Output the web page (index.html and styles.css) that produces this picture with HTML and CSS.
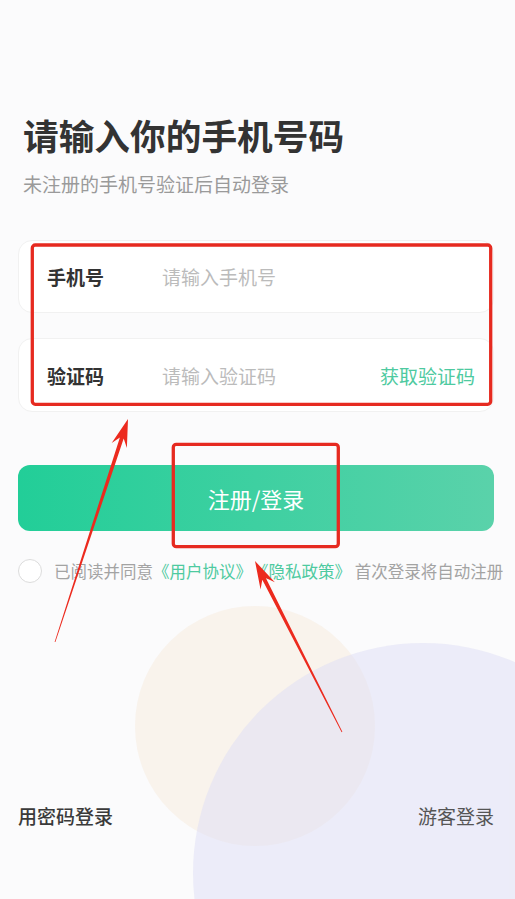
FILE: index.html
```html
<!DOCTYPE html>
<html lang="zh-CN">
<head>
  <meta charset="UTF-8" />
  <meta name="viewport" content="width=device-width, initial-scale=1.0" />
  <title>登录</title>
  <link rel="stylesheet" href="styles.css">
</head>
<body>
  <div class="page">
    <!-- Background circles -->
    <div class="blob blob-beige"></div>
    <div class="blob blob-lilac"></div>

    <h1 class="title">请输入你的手机号码</h1>
    <p class="subtitle">未注册的手机号验证后自动登录</p>

    <div class="field">
      <span class="field-label">手机号</span>
      <span class="field-input">请输入手机号</span>
    </div>
    <div class="field field-code">
      <span class="field-label">验证码</span>
      <span class="field-input">请输入验证码</span>
      <span class="get-code">获取验证码</span>
    </div>

    <button class="submit">注册/登录</button>

    <div class="agree">
      <span class="check"></span>
      <span class="agree-text">已阅读并同意<em>《用户协议》《隐私政策》</em> 首次登录将自动注册</span>
    </div>

    <div class="bottom">
      <span class="pwd-login">用密码登录</span>
      <span class="guest-login">游客登录</span>
    </div>

    <!-- Annotation marks -->
    <svg class="marks" width="515" height="899" viewBox="0 0 515 899">
      <rect x="32.3" y="245" width="458.4" height="159.3" rx="3" />
      <rect x="173.3" y="444.3" width="165" height="102.4" rx="3" />
      <polygon points="55.38,642.12 123.68,438.62 126.89,448.09 128,419 111.69,443.11 119.88,437.38 54.62,641.88" />
      <polygon points="342.36,731.82 265.85,577.91 274.83,582.32 255,561 260.57,589.58 262.29,579.73 341.64,732.18" />
    </svg>
  </div>
</body>
</html>
```

FILE: styles.css
```css
* {
  margin: 0;
  padding: 0;
  box-sizing: border-box;
}

body {
  background: #fbfbfc;
  font-family: "Noto Sans CJK SC", "Noto Sans", sans-serif;
  color: #333;
}

.page {
  position: relative;
  width: 515px;
  min-height: 899px;
  overflow: hidden;
  padding: 115px 21px 70px 18px;
  display: flex;
  flex-direction: column;
}

/* Background circles */
.blob {
  position: absolute;
  border-radius: 50%;
  z-index: 0;
}

.blob-beige {
  left: 135px;
  top: 606px;
  width: 240px;
  height: 240px;
  background: rgba(246, 232, 218, 0.45);
}

.blob-lilac {
  left: 193px;
  top: 643px;
  width: 460px;
  height: 460px;
  background: rgba(222, 222, 245, 0.5);
}

.title,
.subtitle,
.field,
.submit,
.agree,
.bottom {
  position: relative;
  z-index: 1;
}

.title {
  padding-left: 5px;
  font-size: 35.7px;
  line-height: 40px;
  font-weight: 700;
  color: #333;
}

.subtitle {
  margin-top: 16px;
  padding-left: 5px;
  font-size: 19px;
  line-height: 26px;
  color: #9a9a9a;
}

.field {
  margin-top: 43px;
  height: 73px;
  background: #fff;
  border: 1px solid #f1f1f1;
  border-radius: 14px;
  display: flex;
  align-items: center;
  padding: 0 18px 0 28px;
  font-size: 19px;
}

.field-code {
  margin-top: 25px;
  height: 74px;
}

.field-label {
  width: 115px;
  font-weight: 700;
  color: #333;
}

.field-input {
  flex: 1;
  color: #bbb;
}

.get-code {
  color: #4ecaa0;
}

.submit {
  margin-top: 53px;
  height: 66px;
  border: none;
  border-radius: 12px;
  background: linear-gradient(90deg, #22ce98, #5ad2aa);
  color: #fff;
  font-family: inherit;
  font-size: 22px;
}

.agree {
  margin-top: 27px;
  margin-right: -13px;
  display: flex;
  align-items: center;
  gap: 12px;
  height: 26px;
}

.check {
  flex: none;
  width: 24px;
  height: 24px;
  border-radius: 50%;
  border: 1px solid #dcdcdc;
  background: #fff;
}

.agree-text {
  font-size: 16.5px;
  color: #a3a3a3;
  white-space: nowrap;
  text-spacing-trim: space-all;
}

.agree-text em {
  font-style: normal;
  color: #4ecaa0;
}

.bottom {
  margin-top: auto;
  display: flex;
  justify-content: space-between;
  font-size: 19px;
  line-height: 26px;
}

.pwd-login {
  font-weight: 500;
  color: #3a3a3a;
}

.guest-login {
  color: #555;
}

/* Red annotation overlay */
.marks {
  position: absolute;
  top: 0;
  left: 0;
  z-index: 2;
  pointer-events: none;
}

.marks rect {
  fill: none;
  stroke: #e62a20;
  stroke-width: 3.3;
}

.marks polygon {
  fill: #ec2a1e;
}
```
